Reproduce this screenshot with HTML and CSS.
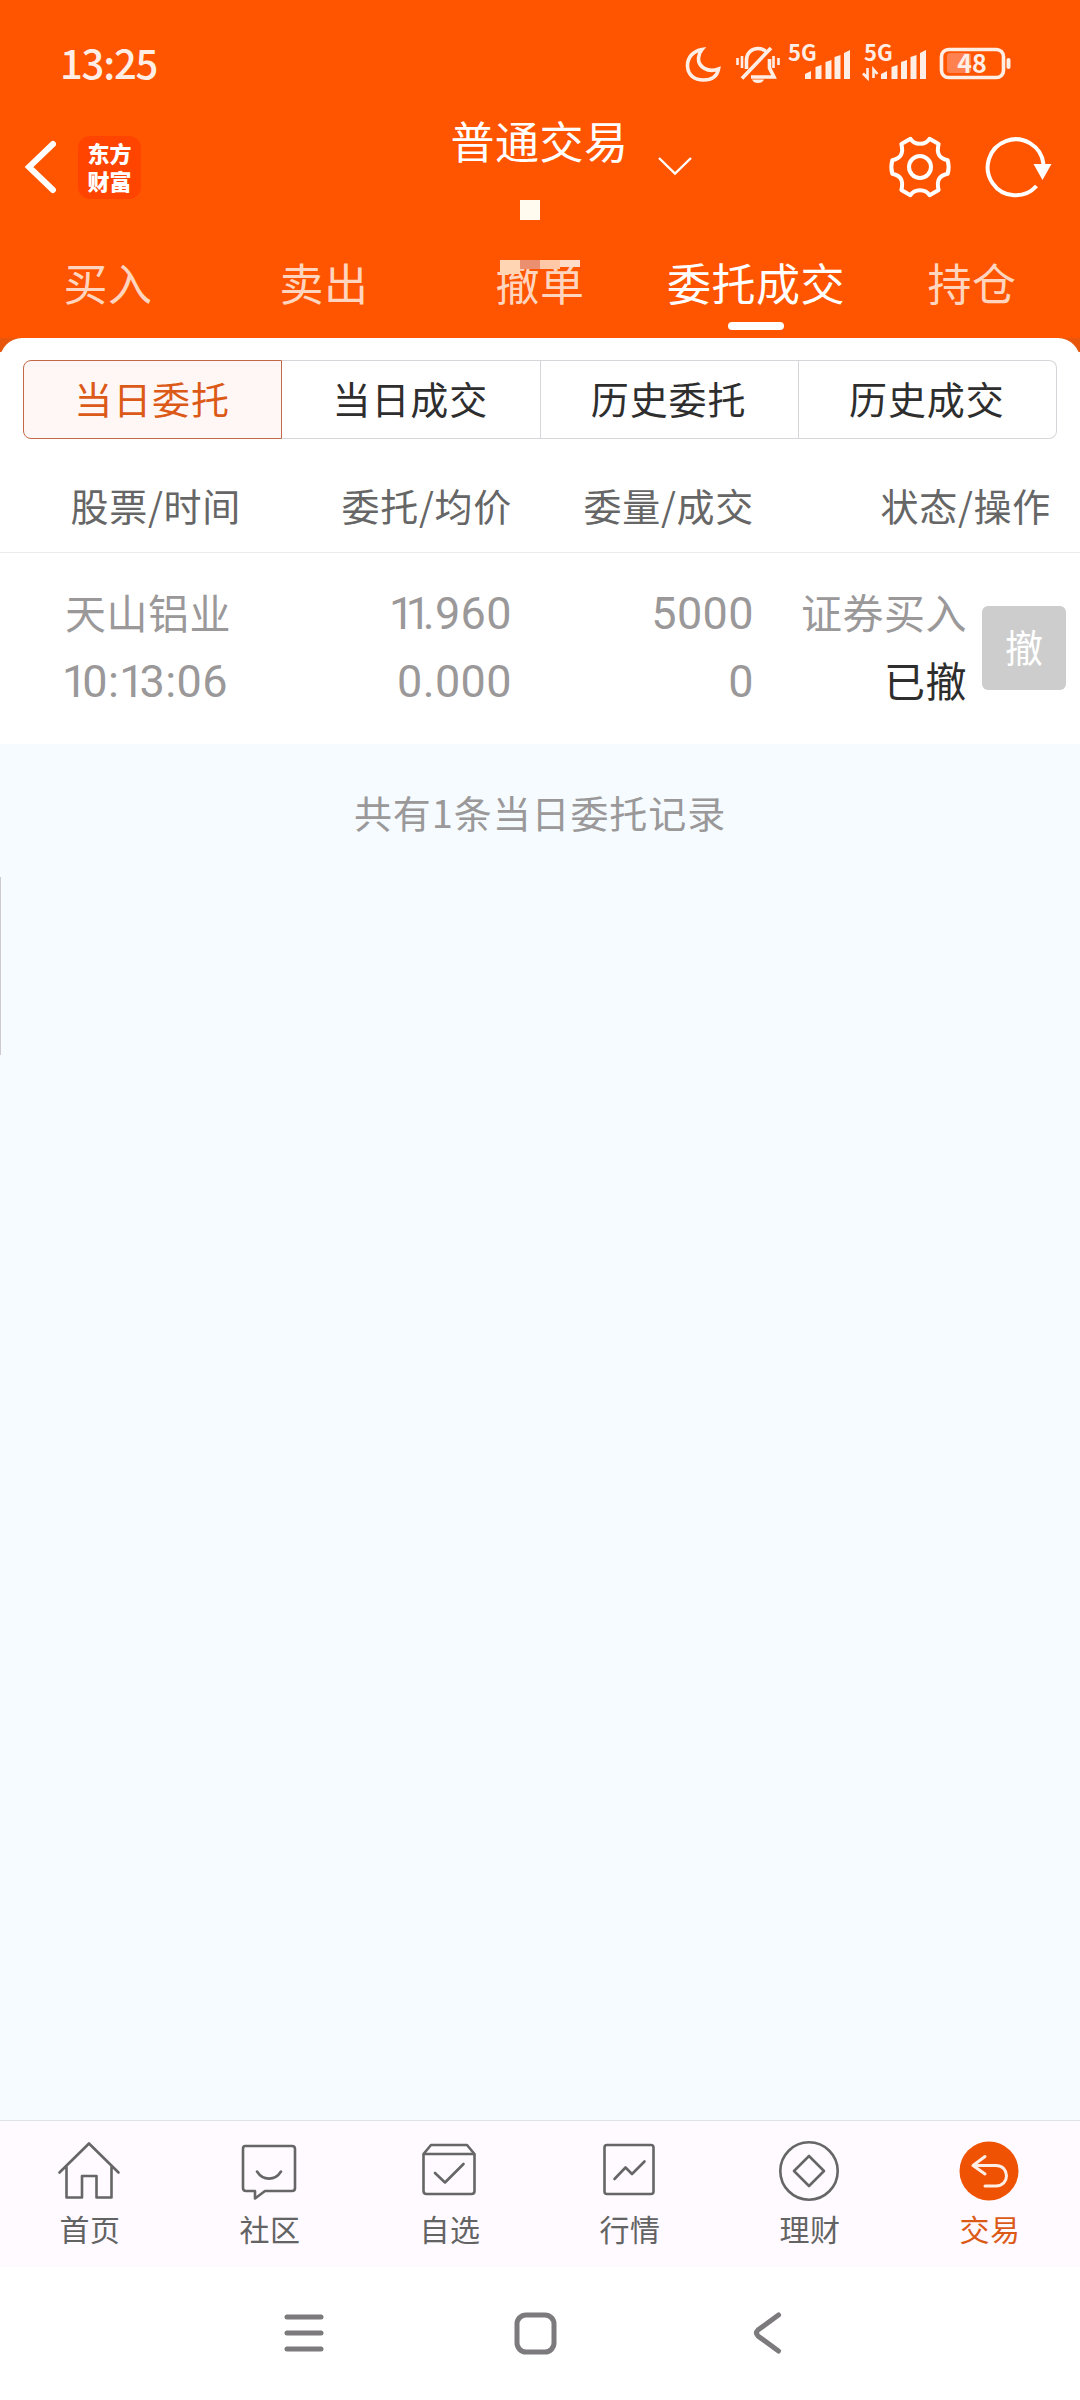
FILE: index.html
```
<!DOCTYPE html>
<html lang="zh-CN">
  <head>
    <meta charset="UTF-8" />
    <meta name="viewport" content="width=device-width, initial-scale=1.0" />
    <title>普通交易 - 委托成交</title>
    <link rel="stylesheet" href="styles.css">
  </head>
  <body>
    <header class="header">
      <div class="status-bar">
        <span class="clock">13:25</span>
        <svg class="status-icons" width="330" height="58" viewBox="684 28 330 58">
          <!-- moon -->
          <path class="line" d="M702 49.500C693 51 687.500 57.500 687.500 65.500C687.500 75 694.500 80 703.500 80C711 80 717 77 718.500 69C708 73 698 67 698.500 58C698.600 54.500 700 52 702 49.500Z" />
          <!-- muted bell -->
          <path class="line" d="M746.500 69V60.500C746.500 53 751.500 48.500 758 48.500C761 48.500 763.500 49.500 765.500 51M769.500 59V68L774 77H751M742 78.500L771 48" />
          <path class="fill" d="M752 79.500H764C763 82 761 83 758 83S753 82 752 79.500Z" />
          <path class="thin" d="M737.500 58V65M742 56V68M773.500 56V68M778.500 58V65" />
          <text class="net" x="788" y="61">5G</text>
          <path class="fill" d="M805 79V74L811 71V79ZM815.500 79V67L821.500 65V79ZM825.500 79V62L831.500 60V79ZM834.500 79V57L840.500 55V79ZM844 79V53L850 50V79Z" />
          <text class="net" x="864" y="61">5G</text>
          <path class="fill" d="M881 79V74L887 71V79ZM891.500 79V67L897.500 65V79ZM901 79V62L907 60V79ZM910.500 79V57L916.500 55V79ZM920 79V53L926 50V79Z" />
          <path class="thin" d="M867.500 68V78L863 73.500M873.500 78V69.500L877.500 74" />
          <!-- battery -->
          <rect class="line" x="941.500" y="49.500" width="62" height="28" rx="7" />
          <rect x="947" y="53" width="24" height="20" rx="3" fill="#ff8150" />
          <rect class="fill" x="1006.500" y="58" width="4" height="11" rx="2" />
          <text class="level" x="972" y="73">48</text>
        </svg>
      </div>

      <div class="title-bar">
        <div class="title-left">
          <svg width="34" height="54" viewBox="0 0 34 54">
            <path d="M31 4L7 27L31 50" fill="none" stroke="#fff" stroke-width="6" stroke-linecap="round" />
          </svg>
          <div class="logo"><span>东方</span><span>财富</span></div>
        </div>
        <div class="title-center">
          <h1 class="page-title">普通交易</h1>
          <svg class="title-arrow" width="36" height="20" viewBox="0 0 36 20">
            <path d="M2 2L18 17.500L34 2" fill="none" stroke="#fff" stroke-width="2.400" />
          </svg>
          <span class="title-mark"></span>
        </div>
        <div class="title-right">
          <svg width="64" height="64" viewBox="-33.500 -33.500 67 67" fill="none" stroke="#fff" stroke-width="4.200" stroke-linejoin="round">
            <path d="M-10 -29.500C-6 -22.500 6 -22.500 10 -29.500L19.500 -24C17 -14 20 -9 29 -7Q31 0 29 7C20 9 17 14 19.500 24L10 29.500C6 22.500 -6 22.500 -10 29.500L-19.500 24C-17 14 -20 9 -29 7Q-31 0 -29 -7C-20 -9 -17 -14 -19.500 -24Z" />
            <circle r="11.500" />
          </svg>
          <svg width="68" height="64" viewBox="-31.500 -32 68 64">
            <path d="M28 -3A28 28 0 1 0 21 19" fill="none" stroke="#fff" stroke-width="4" />
            <path d="M18 -3H36L27 13Z" fill="#fff" />
          </svg>
        </div>
      </div>

      <nav class="tabs">
        <span class="tab">买入</span>
        <span class="tab">卖出</span>
        <span class="tab">撤单
          <span class="mosaic"><i></i><i></i><i></i><i></i></span>
        </span>
        <span class="tab active">委托成交</span>
        <span class="tab">持仓</span>
      </nav>
    </header>

    <main class="main">
      <section class="panel">
        <div class="segment">
          <span class="segment-item active">当日委托</span>
          <span class="segment-item">当日成交</span>
          <span class="segment-item">历史委托</span>
          <span class="segment-item">历史成交</span>
        </div>

        <div class="row table-head">
          <span>股票/时间</span>
          <span>委托/均价</span>
          <span>委量/成交</span>
          <span>状态/操作</span>
        </div>

        <div class="row order">
          <div class="cell">
            <span class="name">天山铝业</span>
            <span class="num time"><b>1</b>0:<b>1</b>3:06</span>
          </div>
          <div class="cell">
            <span class="num price"><b>11</b>.960</span>
            <span class="num">0.000</span>
          </div>
          <div class="cell">
            <span class="num">5000</span>
            <span class="num">0</span>
          </div>
          <div class="cell">
            <span class="name">证券买入</span>
            <span class="name state">已撤</span>
          </div>
          <button class="cancel">撤</button>
        </div>
      </section>

      <p class="summary">共有1条当日委托记录</p>
      <span class="edge-handle"></span>
    </main>

    <nav class="bottom-nav">
      <div class="nav-item">
        <svg class="nav-icon" viewBox="0 0 64 64">
          <path d="M2.500 34.500L32 5.500L61.500 34.500M9.500 29V59.500H25V38H39.500V59.500H54.500V29" />
        </svg>
        <span>首页</span>
      </div>
      <div class="nav-item">
        <svg class="nav-icon" viewBox="0 0 64 64">
          <path d="M8 8H55Q58 8 58 11V50Q58 53 55 53H28L18 60.500V53H9Q6 53 6 50V11Q6 8 8 8ZM20 33.500C26 43 38 43 44 33.500" />
        </svg>
        <span>社区</span>
      </div>
      <div class="nav-item">
        <svg class="nav-icon" viewBox="0 0 64 64">
          <path d="M6.500 16L14 7H50L57.500 16V53Q57.500 56 54.500 56H9.500Q6.500 56 6.500 53ZM6.500 16H57.500M18 35L28 44.500L46.500 26" />
        </svg>
        <span>自选</span>
      </div>
      <div class="nav-item">
        <svg class="nav-icon" viewBox="0 0 64 64">
          <rect x="7.500" y="7" width="49" height="49" rx="2.500" />
          <path d="M17.500 41L28.500 29.500L35 36L47.500 23.500" />
        </svg>
        <span>行情</span>
      </div>
      <div class="nav-item">
        <svg class="nav-icon" viewBox="0 0 64 64">
          <circle cx="32" cy="33" r="28.700" />
          <path d="M32 18L47 33L32 48L17 33Z" />
        </svg>
        <span>理财</span>
      </div>
      <div class="nav-item active">
        <svg class="nav-icon" viewBox="0 0 64 64">
          <circle class="disc" cx="32" cy="33" r="29.500" />
          <path class="back-arrow" d="M28 18.500L16 27.500L28 36M16 27.500H39C53 27.500 53 48 39 48H28" />
        </svg>
        <span>交易</span>
      </div>
    </nav>

    <footer class="system-nav">
      <svg width="44" height="44" viewBox="0 0 44 44"><path d="M5 6H39M5 22H39M5 38H39" /></svg>
      <svg width="44" height="44" viewBox="0 0 44 44"><rect x="4" y="4" width="37" height="37" rx="9" /></svg>
      <svg width="44" height="44" viewBox="0 0 44 44"><path d="M34.500 4L14 19Q11 22 14 25L34.500 40" /></svg>
    </footer>
  </body>
</html>
```

FILE: styles.css
```
* {
  margin: 0;
  padding: 0;
  box-sizing: border-box;
}

body {
  width: 1080px;
  height: 2400px;
  display: flex;
  flex-direction: column;
  font-family: "Noto Sans CJK SC", sans-serif;
  background: #ffffff;
  overflow: hidden;
}

svg {
  display: block;
}

/* Header */
.header {
  height: 352px;
  background: linear-gradient(#ff5500 338px, #e8560c 338px);
  color: #ffffff;
}

.status-bar {
  height: 112px;
  padding: 28px 66px 0 60px;
  display: flex;
  justify-content: space-between;
}

.clock {
  font-size: 40px;
  line-height: 68px;
  font-weight: 500;
  letter-spacing: -1.2px;
  color: #ffeee6;
}

.status-icons .line,
.status-icons .thin {
  fill: none;
  stroke: #ffeee6;
  stroke-width: 3.6;
}

.status-icons .thin {
  stroke-width: 2.6;
}

.status-icons .fill {
  fill: #ffeee6;
}

.status-icons text {
  fill: #ffeee6;
  font-weight: 700;
}

.status-icons .net {
  font-size: 22px;
}

.status-icons .level {
  font-size: 25px;
  text-anchor: middle;
}

.title-bar {
  height: 128px;
  display: grid;
  grid-template-columns: 1fr 1fr 1fr;
  padding: 0 28px 0 22px;
}

.title-left,
.title-right {
  height: 110px;
  display: flex;
  align-items: center;
}

.title-left {
  gap: 22px;
}

.title-right {
  justify-content: flex-end;
  gap: 32px;
}

.logo {
  width: 63px;
  height: 63px;
  border-radius: 12px;
  background: #ff4400;
  display: flex;
  flex-direction: column;
  align-items: center;
  padding-top: 2px;
  font-size: 22px;
  line-height: 28px;
  font-weight: 900;
}

.title-center {
  position: relative;
  display: flex;
  justify-content: center;
  gap: 29px;
  padding-left: 70px;
}

.page-title {
  font-size: 44px;
  line-height: 56px;
  font-weight: 400;
  letter-spacing: 0.5px;
  white-space: nowrap;
}

.title-arrow {
  margin-top: 44px;
}

.title-mark {
  position: absolute;
  left: 155px;
  top: 88px;
  width: 20px;
  height: 20px;
  background: #fffbee;
}

.tabs {
  display: flex;
  height: 98px;
}

.tab {
  position: relative;
  flex: 1;
  text-align: center;
  font-size: 44px;
  line-height: 84px;
  letter-spacing: 0.5px;
  white-space: nowrap;
  color: #ffd5bf;
}

.tab.active {
  color: #ffffff;
}

.tab.active::after {
  content: "";
  position: absolute;
  left: 80px;
  top: 82px;
  width: 56px;
  height: 8px;
  border-radius: 4px;
  background: #ffffff;
}

.mosaic {
  position: absolute;
  left: 68px;
  top: 20px;
  display: flex;
}

.mosaic i {
  width: 20px;
  height: 9px;
  background: #ffc9a8;
}

.mosaic i:nth-child(1) {
  height: 14px;
  background: #ffd5b4;
}

.mosaic i:nth-child(2) {
  background: #ea9070;
}

.mosaic i:nth-child(4) {
  height: 7px;
  background: #ffdcc8;
}

/* Orders */
.main {
  position: relative;
  flex: 1;
  background: #f5fbff;
}

.panel {
  position: relative;
  height: 406px;
  margin-top: -14px;
  border-radius: 22px 22px 0 0;
  background: #ffffff;
}

.segment {
  display: flex;
  padding: 22px 23px 0;
}

.segment-item {
  flex: 1;
  height: 79px;
  border: 1px solid #d6d6da;
  border-left-width: 0;
  text-align: center;
  font-size: 38px;
  line-height: 73px;
  letter-spacing: 0.9px;
  padding-right: 1px;
  color: #2e2e2e;
}

.segment-item.active {
  border: 1px solid #c26a48;
  border-radius: 8px 0 0 8px;
  background: #fff6f6;
  color: #dc5a18;
}

.segment-item:last-child {
  border-radius: 0 8px 8px 0;
}

.row {
  display: grid;
  grid-template-columns: 250px 262px 242px 1fr;
}

.table-head {
  height: 114px;
  padding: 0 29px 0 0;
  border-bottom: 1px solid #ebebed;
  font-size: 38px;
  line-height: 132px;
  letter-spacing: 0.7px;
  text-align: right;
  color: #666666;
}

.table-head span:first-child {
  padding-right: 9px;
}

.order {
  grid-template-columns: 250px 262px 242px 213px 1fr;
  height: 191px;
  color: #9a9899;
}

.cell {
  display: flex;
  flex-direction: column;
  align-items: flex-end;
  padding-top: 26px;
}

.cell:first-child {
  align-items: flex-start;
  padding-left: 65px;
}

.cell span {
  height: 68px;
  line-height: 68px;
  white-space: nowrap;
}

.cell .name {
  font-size: 41px;
  line-height: 65px;
  letter-spacing: 0.5px;
}

.cell .num {
  font-family: Roboto, sans-serif;
  font-size: 45px;
  line-height: 70px;
  letter-spacing: 0.4px;
}

/* the figure 1 sits closer to its neighbours */
.num b {
  font-weight: 400;
}

.time b {
  letter-spacing: -5px;
}

.price b {
  letter-spacing: -8.5px;
}

.cell .time {
  margin-left: -3px;
}

.cell .state {
  color: #2e2e2e;
}

.cancel {
  width: 84px;
  height: 84px;
  margin: 53px 0 0 15px;
  border: none;
  border-radius: 6px;
  background: #cdcdcd;
  color: #ffffff;
  font-family: inherit;
  font-size: 38px;
  line-height: 80px;
  padding-bottom: 5px;
}

.summary {
  text-align: center;
  margin-top: 34px;
  font-size: 38px;
  line-height: 67px;
  letter-spacing: 0.9px;
  color: #9a9899;
}

.edge-handle {
  position: absolute;
  left: 0;
  top: 525px;
  width: 1px;
  height: 178px;
  background: #cccccf;
}

/* Bottom navigation */
.bottom-nav {
  display: flex;
  height: 147px;
  border-top: 1px solid #e0e3e4;
  background: #fefaff;
}

.nav-item {
  flex: 1;
  display: flex;
  flex-direction: column;
  align-items: center;
  padding-top: 17px;
  font-size: 30px;
  line-height: 44px;
  letter-spacing: 0.5px;
  color: #636363;
}

.nav-item span {
  margin-top: 4px;
}

.nav-icon {
  width: 64px;
  height: 64px;
  margin-right: 2px;
  fill: none;
  stroke: #666666;
  stroke-width: 2.6;
  stroke-linejoin: round;
  stroke-linecap: round;
}

.nav-item.active {
  color: #dc5a18;
}

.nav-icon .disc {
  fill: #f05203;
  stroke: none;
}

.nav-icon .back-arrow {
  stroke: #ffeee6;
  stroke-width: 3;
}

.system-nav {
  display: flex;
  height: 133px;
  padding: 44px 0 0 282px;
  gap: 187px;
}

.system-nav svg {
  fill: none;
  stroke: #7c7a7c;
  stroke-width: 5;
  stroke-linecap: round;
}
```
